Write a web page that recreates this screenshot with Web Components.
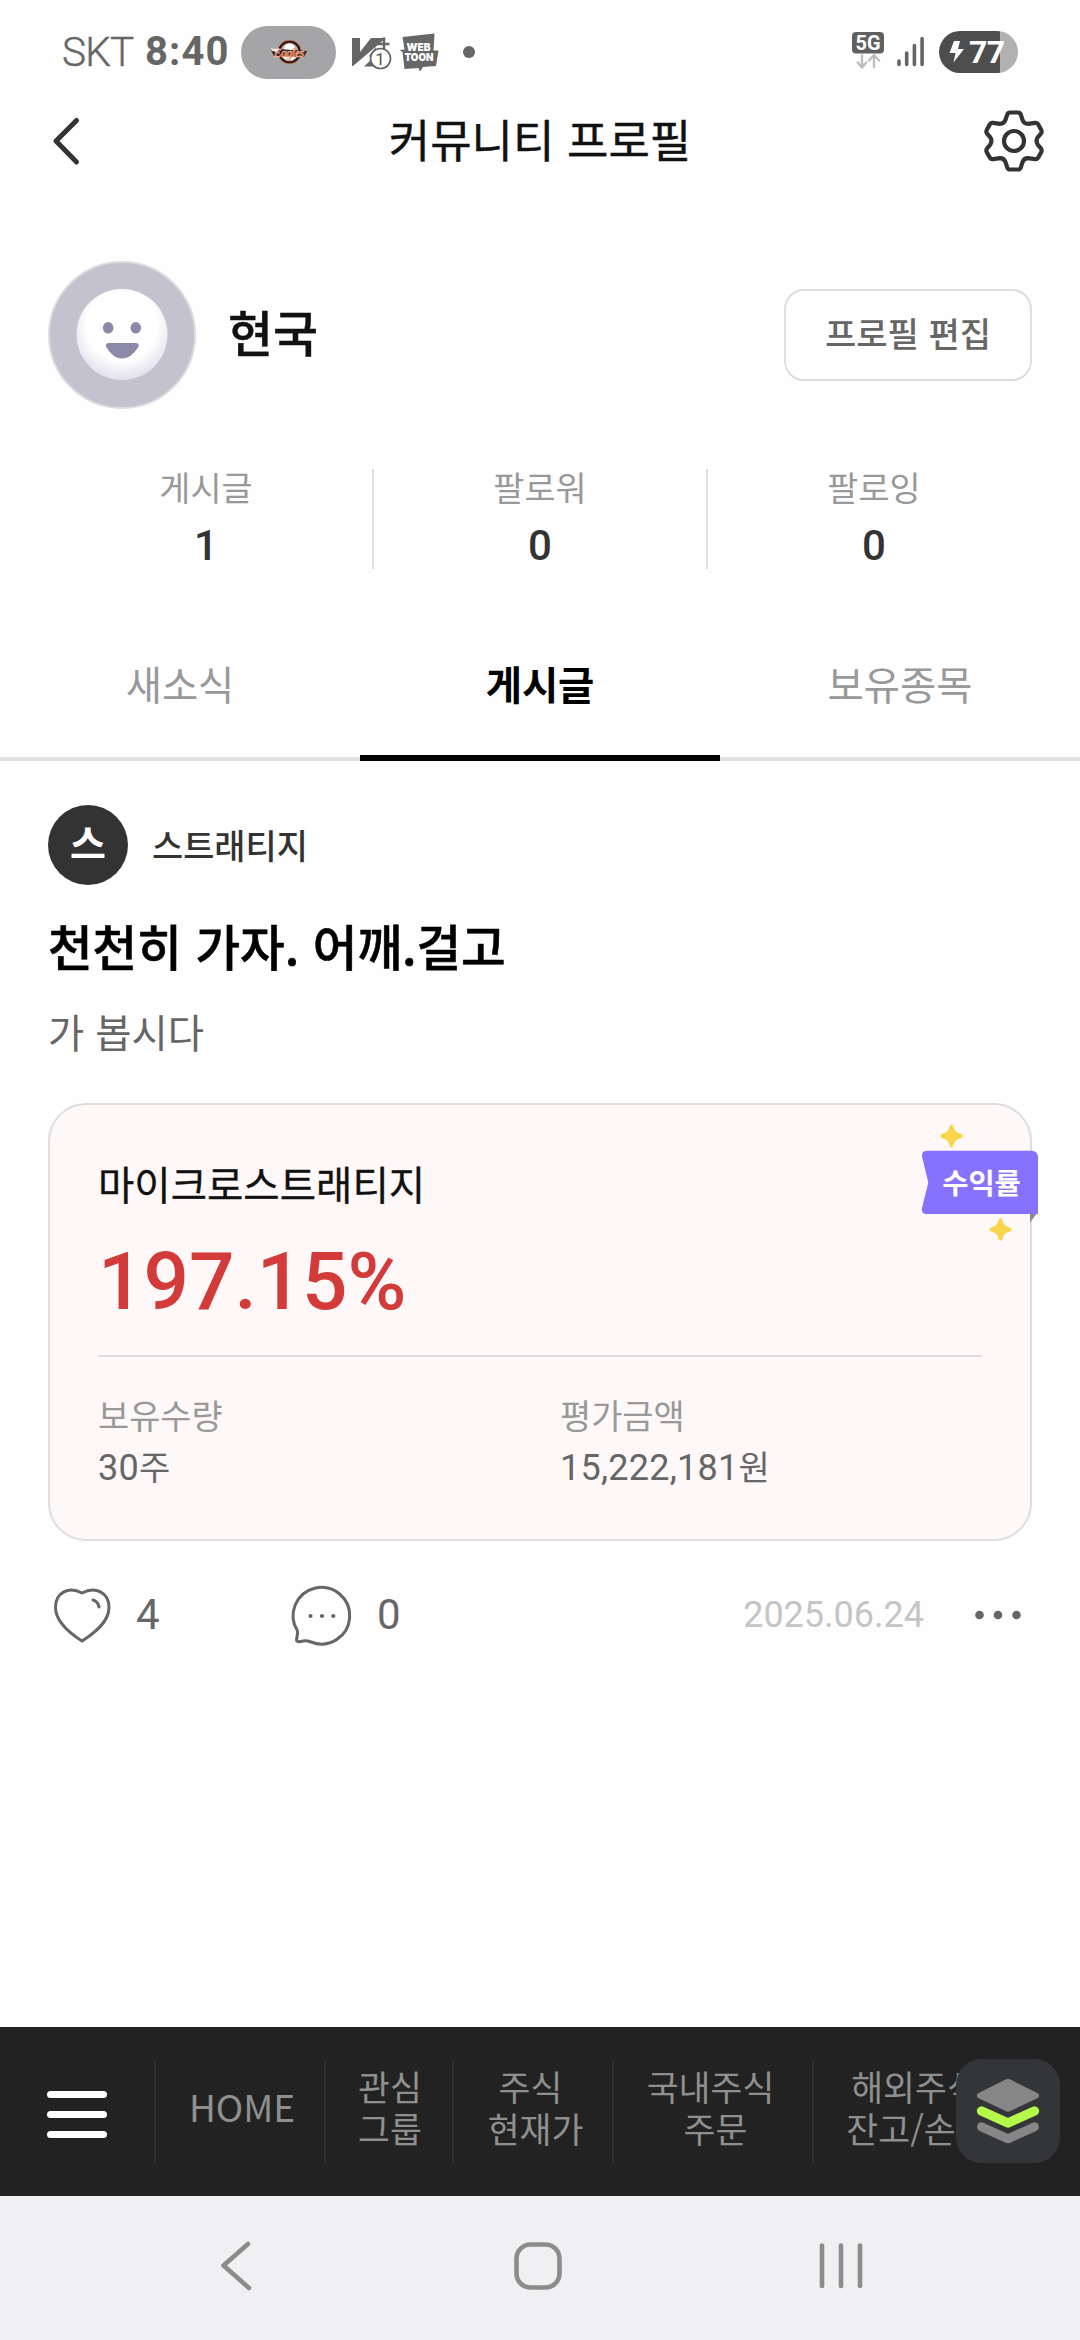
<!DOCTYPE html>
<html lang="ko">
<head>
<meta charset="utf-8">
<title>커뮤니티 프로필</title>
<style>
html,body{margin:0;padding:0}
body{width:1080px;height:2340px;overflow:hidden;background:#fefefe;--kr:"Noto Sans CJK KR",sans-serif;--num:Roboto,"Noto Sans CJK KR",sans-serif;font-family:var(--kr)}
</style>
</head>
<body>
<community-app></community-app>
<script>
const define = (name, css, html) => {
  const tpl = document.createElement('template');
  tpl.innerHTML = `<style>*{box-sizing:border-box}svg{display:block;flex:none;overflow:visible}${css}</style>${html}`;
  customElements.define(name, class extends HTMLElement {
    constructor() {
      super();
      this.attachShadow({ mode: 'open' }).appendChild(tpl.content.cloneNode(true));
    }
  });
};

define('status-bar', `
:host{display:flex;align-items:center;justify-content:space-between;height:104px;padding:0 61px 0 62px;color:#666;font-family:var(--num)}
.l,.r{display:flex;align-items:center}
.c{font-size:40.500px;font-weight:300;width:83px;white-space:nowrap;line-height:48px;letter-spacing:-.8px;-webkit-text-stroke:.4px #666}
.t{font-size:40px;font-weight:700;width:96px;letter-spacing:1.100px;line-height:48px}
.pill{width:95px;height:53px;border-radius:27px;background:#a5a5a7;display:flex;align-items:center;justify-content:center}
`, `
<div class="l"><span class="c">SKT</span><span class="t">8:40</span>
<span class="pill"><svg width="38" height="24" viewBox="270 40 38 24">
<circle cx="289.500" cy="52" r="10.500" fill="#c9a79c" stroke="#2a1a1c" stroke-width="2.600"/>
<circle cx="289.500" cy="52" r="11.900" fill="none" stroke="#d9774f" stroke-width=".8"/>
<circle cx="289.500" cy="49" r="5.500" fill="#fff"/><path d="M283 57h13l-3 3h-7z" fill="#fff"/>
<path d="M270 48l8 1 29 2-3 6-30-1z" fill="#2a1a1c"/>
<text x="289" y="56.500" text-anchor="middle" font-family="Liberation Serif" font-style="italic" font-weight="700" font-size="12" textLength="31" fill="#f0713f" stroke="#f6d9c8" stroke-width=".3">Eagles</text>
<path d="M270 48l10 1-3 3-5-1z" fill="#f5e6e0"/></svg></span>
<svg style="margin-left:16px" width="40" height="38" viewBox="352 33 40 38">
<path d="M352 38h8v14l11-14h15l-33 28h-1z" fill="#666"/>
<path d="M384 37.500v14M377 44h12.500" stroke="#666" stroke-width="2.400"/>
<path d="M376 47l-7 9 4 2-9 8.500h10" fill="#666"/>
<circle cx="380.500" cy="58.500" r="10" fill="#fff" stroke="#666" stroke-width="1.700"/>
<text x="380" y="64.500" text-anchor="middle" font-family="Roboto" font-size="17" fill="#555">1</text></svg>
<svg style="margin-left:7px" width="40" height="38" viewBox="399 33 40 38">
<path d="M402.500 37l32-3.500-1 17h5l-2.500 15.500-13 1-3 4.500-1.500-3.500-14 1-2-17-3-2 5-.5z" fill="#666"/>
<text x="418.500" y="50.500" text-anchor="middle" font-family="Inter" font-weight="900" font-size="10.500" textLength="24" lengthAdjust="spacingAndGlyphs" fill="#fff">WEB</text>
<text x="419" y="61" text-anchor="middle" font-family="Inter" font-weight="900" font-size="11" textLength="29" lengthAdjust="spacingAndGlyphs" fill="#fff">TOON</text></svg>
<svg style="margin-left:24px" width="12" height="12" viewBox="0 0 12 12"><circle cx="6" cy="6" r="6" fill="#666"/></svg>
</div>
<div class="r"><svg width="168" height="44" viewBox="851 30 168 44">
<rect x="852" y="32" width="32" height="21.500" rx="4" fill="#606060"/>
<text x="868" y="50.300" text-anchor="middle" font-family="Roboto" font-weight="700" font-size="21" textLength="25" lengthAdjust="spacingAndGlyphs" fill="#fff">5G</text>
<g fill="none" stroke="#bebebe" stroke-width="2.400" stroke-linecap="round" stroke-linejoin="round"><path d="M862 55.500v11.500M857.800 62.500l4.200 5 4.200-5"/><path d="M874 67V55.500M869 60.500l5-5.500 5 5.500"/></g>
<g stroke="#666" stroke-width="3.600" stroke-linecap="round"><path d="M899 61v3.500M906.700 53v11.500M914.400 45.500v19M922.100 38.500v26"/></g>
<clipPath id="b"><rect x="939" y="31" width="79" height="42" rx="21"/></clipPath>
<g clip-path="url(#b)"><rect x="939" y="31" width="61" height="42" fill="#4d4d4d"/><rect x="1000" y="31" width="18" height="42" fill="#b1b1b1"/></g>
<path d="M954 41h6l-2 8h6l-10.500 13.500 2-9.500h-6z" fill="#fff"/>
<text x="969" y="63.300" font-family="Roboto" font-weight="700" font-size="32" textLength="36" fill="#fff">77</text></svg></div>`);

define('title-bar', `
:host{display:flex;align-items:center;justify-content:space-between;height:74px;padding:0 35px 0 51px}
h1{margin:0;padding-bottom:5px;font-weight:400;font-size:45px;line-height:60px;color:#111;-webkit-text-stroke:.4px #111;padding-right:14px}
svg{fill:none;stroke:#333;stroke-linecap:round;stroke-linejoin:round}
`, `
<svg width="60" height="50" viewBox="51 116 60 50" stroke-width="5"><path d="M76.500 120.500L56 141l20.500 21"/></svg>
<h1><slot></slot></h1>
<svg width="62" height="66" viewBox="983 108 62 66" stroke-width="4.200">
<path d="M1010 112.500h8q2 0 2.700 1.800l1.800 5.500q1.400 4 5.500 4l7-1q2-.3 3 1.300l3.300 6q.8 1.700-.2 3.200l-3.400 4q-2.200 3.700 0 7.400l3.400 4q1 1.500.2 3.200l-3.300 6q-1 1.600-3 1.300l-7-1q-4.100 0-5.500 4l-1.800 5.500q-.7 1.800-2.700 1.800h-8q-2 0-2.700-1.800l-1.800-5.500q-1.400-4-5.500-4l-7 1q-2 .3-3-1.300l-3.300-6q-.8-1.700.2-3.200l3.400-4q2.200-3.700 0-7.400l-3.400-4q-1-1.500-.2-3.200l3.300-6q1-1.600 3-1.300l7 1q4.100 0 5.500-4l1.800-5.500q.7-1.800 2.700-1.800z"/>
<circle cx="1014" cy="141" r="10"/></svg>`);

define('user-profile', `
:host{display:flex;align-items:center;height:148px;margin:83px 48px 0}
h2{margin:0 auto 0 32px;padding-bottom:8px;font-size:49px;line-height:60px;font-weight:500;color:#111;-webkit-text-stroke:.4px #111}
button{width:248px;height:92px;border:2px solid #dedede;border-radius:20px;background:none;font:500 34px/50px var(--kr);color:#666;padding:0 0 4px}
`, `
<svg width="148" height="148" viewBox="48 261 148 148">
<defs><radialGradient id="f" cx=".5" cy=".4" r=".62"><stop offset=".62" stop-color="#fff"/><stop offset=".88" stop-color="#e9e7f1"/><stop offset="1" stop-color="#e2e0ec"/></radialGradient></defs>
<circle cx="122" cy="335" r="73" fill="#c4c2ce" stroke="#dcdcde" stroke-width="2"/>
<circle cx="122" cy="334.500" r="45.500" fill="url(#f)"/>
<g fill="#8d89a8"><ellipse cx="108.200" cy="327.800" rx="5.300" ry="5.800"/><ellipse cx="135.800" cy="327.800" rx="5.300" ry="5.800"/>
<path d="M108 343h28.500q3.500 1 1.500 4.500-7 11-16 11t-15.500-11q-2-3.500 1.500-4.500z"/></g></svg>
<h2><slot></slot></h2><button>프로필 편집</button>`);

define('stat-item', `
:host{flex:1;display:flex;flex-direction:column;align-items:center;height:100px;color:#999;font-size:33.800px;line-height:36px}
:host(:not(:last-child)){box-shadow:1px 0 #dedede,inset -1px 0 #dedede}
b{font:500 42px/44px var(--num);color:#333;margin-top:19px}
`, `<slot></slot><b><slot name="n"></slot></b>`);
define('profile-stats', `:host{display:flex;margin:60px 39px 0}`, `<slot></slot>`);

define('tab-item', `
:host{flex:1;text-align:center;height:131px;font-size:39.400px;line-height:106px;color:#999;border-bottom:4px solid #e0e0e0}
:host([active]){color:#000;font-weight:700;border-bottom:6px solid #000}
`, `<slot></slot>`);
define('tab-bar', `:host{display:flex;margin-top:61px}`, `<slot></slot>`);

define('rate-badge', `:host{display:block;position:absolute;left:868px;top:15px}text{font-family:var(--kr)}`, `
<svg width="124" height="125" viewBox="918 1120 124 125">
<defs><path id="s" d="M0-11.500q1.800 0 2.200 3 1.200 4.800 6 6 3 .6 3 2.500t-3 2.500q-4.800 1.200-6 6-.4 3-2.200 3t-2.200-3q-1.200-4.800-6-6-3-.6-3-2.500t3-2.500q4.800-1.200 6-6 .4-3 2.200-3z" fill="#fbd549"/></defs>
<use href="#s" x="951.500" y="1136"/><use href="#s" x="1000.500" y="1229.500"/>
<path d="M1030 1212h8l-8 10.500z" fill="#8c8c8c"/>
<path d="M927 1150.700h104q7 0 7 7V1214H926q-5-.5-4-6l6.300-25.500L922 1156.500q-.7-5.500 5-5.800z" fill="#8672ff"/>
<text x="981.500" y="1193.600" text-anchor="middle" font-weight="700" font-size="28.500" fill="#fff">수익률</text></svg>`);

define('holding-card', `
:host{display:block;position:relative;height:438px;margin-top:47px;border:2px solid #dedede;border-radius:38px;background:#fef8f8;padding:53px 48px 0}
.n{font-size:39.500px;line-height:50px;color:#111;-webkit-text-stroke:.3px #111}
.p{font:500 80px/80px var(--num);color:#d33b3b;margin-top:34px}
hr{border:0;height:2px;background:#dedede;margin:33px 0 38px}
.g{display:flex}.g>div{width:462px;flex:none}
.k{font-size:33.900px;line-height:40px;color:#999}
.v{font:400 36px/50px var(--num);color:#666;margin-top:8px;letter-spacing:.25px}
i{font:400 34px/0 var(--kr);letter-spacing:0}
`, `<div class="n">마이크로스트래티지</div><div class="p">197.15%</div><hr>
<div class="g"><div><div class="k">보유수량</div><div class="v">30<i>주</i></div></div>
<div><div class="k">평가금액</div><div class="v">15,222,181<i>원</i></div></div></div>
<rate-badge></rate-badge>`);

define('post-actions', `
:host{display:flex;align-items:center;height:60px;margin-top:44px;color:#666;font:400 42px/60px var(--num)}
svg{fill:none;stroke:#666;stroke-width:3;stroke-linecap:round;stroke-linejoin:round}
span{width:133px;margin-left:24px}
time{margin-left:auto;font-size:36px;color:#c5c5c5;margin-right:51px}
`, `
<svg width="64" height="60" viewBox="48 1585 64 60"><path d="M82 1593c-13-7-26.500-1-26.500 14.500 0 14.500 14 25.500 26.500 33.500 12.500-8 27-19 27-33.500 0-15.500-14-21.500-27-14.500z"/><path d="M93 1600q5 1.500 6 7"/></svg>
<span>4</span>
<svg style="margin-left:22px" width="62" height="60" viewBox="291 1585 62 60"><path d="M297.300 1630.500A28.300 28.300 0 1 1 311 1642q-5-2-9-.8-5.500 1.300-5.500-1.200c0-3 2-5.500.8-9.500z"/><g fill="#666" stroke="none"><circle cx="310.500" cy="1616" r="2.100"/><circle cx="322" cy="1616" r="2.100"/><circle cx="333.300" cy="1616" r="2.100"/></g></svg>
<span>0</span><time>2025.06.24</time>
<svg width="57" height="12" viewBox="975 1609 57 12" style="fill:#666;stroke:none"><circle cx="979.500" cy="1615" r="4.300"/><circle cx="998" cy="1615" r="4.300"/><circle cx="1016.500" cy="1615" r="4.300"/></svg>`);

define('post-item', `
:host{display:block;padding:44px 48px 0}
.a{display:flex;align-items:center;gap:24px;height:80px;font-size:33.900px;font-weight:500;color:#333}
.o{width:80px;height:80px;border-radius:50%;background:#333;color:#fff;font-weight:700;font-size:39px;line-height:73px;text-align:center}
.a span{line-height:50px}
h3{margin:30px 0 0;font-size:48.500px;line-height:60px;font-weight:500;color:#000;-webkit-text-stroke:.6px #000;white-space:nowrap}
p{margin:31px 0 0;font-size:39.400px;line-height:50px;color:#666}
`, `<div class="a"><div class="o">스</div><span>스트래티지</span></div>
<h3><slot name="title"></slot></h3><p><slot></slot></p>
<holding-card></holding-card><post-actions></post-actions>`);

define('menu-cell', `
:host{flex:none;display:flex;flex-direction:column;align-items:center;justify-content:center;height:104px;border-left:2px solid #2e2e2e;color:#8f8f8f;font-size:34.700px;line-height:42px;white-space:nowrap;padding-bottom:10px}
::slotted(:first-child){margin-left:var(--a,0)}
::slotted(:last-child){margin-left:var(--b,0)}
`, `<slot></slot>`);
define('menu-bar', `
:host{display:flex;align-items:center;position:relative;height:169px;margin-top:auto;background:#222;overflow:hidden}
.h{width:154px;padding-left:47px;flex:none}
.w{width:60px;height:47px;display:flex;flex-direction:column;justify-content:space-between;margin-top:6px}
.w i{height:7px;border-radius:4px;background:#fff}
.f{position:absolute;left:956px;top:32px;width:104px;height:104px;border-radius:26px;background:#343539}
`, `<div class="h"><div class="w"><i></i><i></i><i></i></div></div><slot></slot>
<div class="f"><svg width="104" height="104" viewBox="956 2059 104 104" fill="none" stroke-linejoin="round" stroke-linecap="round">
<path d="M1008 2081.800l28 13.800-28 13.200-28-13.200z" fill="#868686" stroke="#868686" stroke-width="6"/>
<path d="M981.500 2126.800l26.500 12 26.500-12" stroke="#868686" stroke-width="9"/>
<path d="M981.500 2111l26.500 12 26.500-12" stroke="#b5f94a" stroke-width="9.300"/></svg></div>`);

define('system-nav', `:host{display:block;height:144px;background:#f0f0f2}`, `
<svg width="1080" height="144" viewBox="0 2196 1080 144" fill="none" stroke="#8c8c8c" stroke-width="4.600" stroke-linecap="round" stroke-linejoin="round">
<path d="M248 2244l-24.500 21.500 25.500 22.500"/><rect x="516.500" y="2244.500" width="43" height="43" rx="14"/>
<path d="M822 2245.500v40.500M841 2245.500v40.500M860 2245.500v40.500"/></svg>`);

define('community-app', `:host{display:flex;flex-direction:column;width:1080px;height:2340px;background:#fefefe}`, `
<status-bar></status-bar><title-bar>커뮤니티 프로필</title-bar><user-profile>현국</user-profile>
<profile-stats><stat-item>게시글<span slot="n">1</span></stat-item><stat-item>팔로워<span slot="n">0</span></stat-item><stat-item>팔로잉<span slot="n">0</span></stat-item></profile-stats>
<tab-bar><tab-item>새소식</tab-item><tab-item active>게시글</tab-item><tab-item>보유종목</tab-item></tab-bar>
<post-item><span slot="title">천천히 가자. 어깨.걸고</span>가 봅시다</post-item>
<menu-bar>
<menu-cell style="width:170px;font-size:37px;padding-left:4px;padding-bottom:11px">HOME</menu-cell>
<menu-cell style="width:128px;padding-left:2px"><div>관심</div><div>그룹</div></menu-cell>
<menu-cell style="width:160px;--a:-5px;--b:5px"><div>주식</div><div>현재가</div></menu-cell>
<menu-cell style="width:200px;--a:-5px;--b:5px"><div>국내주식</div><div>주문</div></menu-cell>
<menu-cell style="width:204px;--b:4px"><div>해외주식</div><div>잔고/손익</div></menu-cell>
</menu-bar><system-nav></system-nav>`);
</script>
</body>
</html>
